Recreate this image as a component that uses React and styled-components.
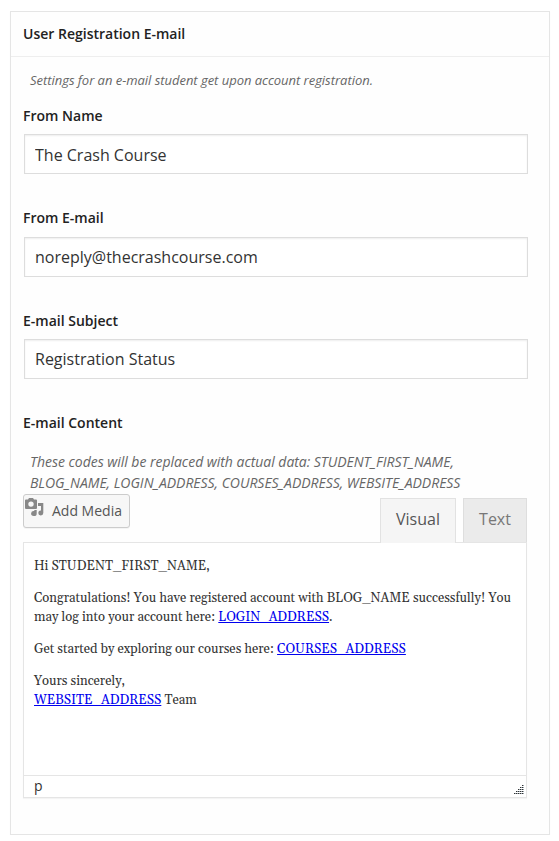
import React from "react";
import styled, { createGlobalStyle } from "styled-components";

const Global = createGlobalStyle`
  * { box-sizing: border-box; }
  body { margin: 0; background: #fff; font-family: "Open Sans", sans-serif; color: #32373c; }
`;

const Panel = styled.section`
  width: 540px;
  height: 824px;
  margin: 11px 0 0 10px;
  border: 1px solid #e5e5e5;
  background: #fefefe;
  box-shadow: 0 1px 1px rgba(0, 0, 0, 0.04);
`;

const PanelTitle = styled.h3`
  margin: 0;
  height: 45px;
  padding: 0 12px;
  border-bottom: 1px solid #eee;
  font-size: 14px;
  font-weight: 600;
  line-height: 44px;
  color: #222;
`;

const PanelBody = styled.div`
  padding: 13px 21px 0 12px;
`;

const Hint = styled.p`
  margin: 0;
  padding-left: 7px;
  font-size: ${(p) => p.$size}px;
  line-height: 21px;
  letter-spacing: -0.03px;
  font-style: italic;
  color: #666;
`;

const Fields = styled.div`
  padding-top: 13.9px;
`;

const Field = styled.div`
  height: 102.5px;
`;

const Label = styled.label`
  display: block;
  font-size: 14px;
  font-weight: 600;
  line-height: 22px;
  color: #222;
`;

const Input = styled.input`
  display: block;
  width: 504px;
  height: 40px;
  margin: 7.5px 0 0 1px;
  padding: ${(p) => p.$nudge || 0}px 10px 0;
  border: 1px solid #ddd;
  border-radius: 0;
  outline: none;
  background: #fff;
  box-shadow: inset 0 1px 2px rgba(0, 0, 0, 0.07);
  font: 16px "Open Sans", sans-serif;
  color: #333;
`;

const ContentHead = styled.div`
  height: 38.6px;
`;

const Tools = styled.div`
  display: flex;
  align-items: flex-start;
  width: 504px;
  height: 49px;
  margin-top: 1px;
`;

const MediaButton = styled.button`
  display: flex;
  align-items: center;
  width: 107px;
  height: 34px;
  margin-right: auto;
  padding: 0 0 1px 1px;
  border: 1px solid #ccc;
  border-radius: 3px;
  background: #f7f7f7;
  box-shadow: 0 1px 0 rgba(0, 0, 0, 0.04);
  font: 14px "Open Sans", sans-serif;
  color: #555;
  white-space: nowrap;
`;

const MediaGlyph = styled.svg`
  width: 19px;
  height: 19px;
  margin: -6px 8px 0 0;
  flex: none;
`;

const Tab = styled.button`
  position: relative;
  width: ${(p) => p.$width}px;
  height: ${(p) => (p.$active ? 45 : 44)}px;
  margin: 4px 0 0 ${(p) => (p.$active ? 0 : 7)}px;
  padding: 0 0 ${(p) => (p.$active ? 3 : 2)}px;
  border: 1px solid ${(p) => (p.$active ? "#e2e2e2" : "#dedede")};
  border-bottom: 0;
  background: ${(p) => (p.$active ? "#f5f5f5" : "#ebebeb")};
  font: 16px "Open Sans", sans-serif;
  color: ${(p) => (p.$active ? "#555" : "#777")};
`;

const Editor = styled.div`
  width: 504px;
  height: 256px;
  margin-top: -1px;
  display: flex;
  flex-direction: column;
  border: 1px solid #e5e5e5;
  background: #fff;
  box-shadow: 0 1px 1px rgba(0, 0, 0, 0.04);
`;

const Message = styled.div`
  flex: 1;
  padding: 14px 10px 0;
  font-family: Georgia, Gelasio, "Liberation Serif", serif;
  font-size: 13px;
  line-height: 19px;
  color: #333;
`;

const Paragraph = styled.p`
  margin: 0 0 13px;
`;

const Link = styled.a`
  color: #0000ee;
  text-decoration: underline;
  text-decoration-skip-ink: none;
`;

const StatusBar = styled.div`
  display: flex;
  justify-content: space-between;
  align-items: flex-end;
  height: 22px;
  padding: 0 2px 3px 10px;
  border-top: 1px solid #e5e5e5;
  font-size: 14px;
  line-height: 20px;
  color: #333;
`;

const StatusPath = styled.span`
  height: 18px;
`;

const Grip = styled.svg`
  width: 10px;
  height: 9px;
`;

function MediaIcon() {
  return (
    <MediaGlyph viewBox="0 0 19 19" fill="#888">
      <path
        fillRule="evenodd"
        d="M1 1.500h2L4 0h4l1 1.500h2q1 0 1 1V10q0 1-1 1H1q-1 0-1-1V2.500q0-1 1-1zM6 3.400a2.700 2.700 0 1 0 0 5.400a2.700 2.700 0 0 0 0-5.400z"
      />
      <path d="M13 5H18.300v10a2.500 2.400 0 1 1-2.300-2.400V8h-3z" />
      <path d="M9.300 12H11.700v3.500a2.800 2.500 0 1 1-2.400-2.400z" />
    </MediaGlyph>
  );
}

const gripRows = [1, 2, 3, 4, 5];

export default function App() {
  return (
    <>
      <Global />
      <Panel>
        <PanelTitle>User Registration E-mail</PanelTitle>
        <PanelBody>
          <Hint $size={13}>Settings for an e-mail student get upon account registration.</Hint>
          <Fields>
            <Field>
              <Label htmlFor="name">From Name</Label>
              <Input id="name" $nudge={1} defaultValue="The Crash Course" />
            </Field>
            <Field>
              <Label htmlFor="email">From E-mail</Label>
              <Input id="email" defaultValue="noreply@thecrashcourse.com" />
            </Field>
            <Field>
              <Label htmlFor="subject">E-mail Subject</Label>
              <Input id="subject" defaultValue="Registration Status" />
            </Field>
          </Fields>
          <ContentHead>
            <Label as="div">E-mail Content</Label>
          </ContentHead>
          <Hint $size={14}>
            These codes will be replaced with actual data: STUDENT_FIRST_NAME,
            <br />
            BLOG_NAME, LOGIN_ADDRESS, COURSES_ADDRESS, WEBSITE_ADDRESS
          </Hint>
          <Tools>
            <MediaButton>
              <MediaIcon />
              Add Media
            </MediaButton>
            <Tab $active $width={76}>Visual</Tab>
            <Tab $width={64}>Text</Tab>
          </Tools>
          <Editor>
            <Message>
              <Paragraph>Hi STUDENT_FIRST_NAME,</Paragraph>
              <Paragraph>
                Congratulations! You have registered account with BLOG_NAME successfully! You
                <br />
                may log into your account here: <Link href="#login">LOGIN_ADDRESS</Link>.
              </Paragraph>
              <Paragraph>
                Get started by exploring our courses here: <Link href="#courses">COURSES_ADDRESS</Link>
              </Paragraph>
              <Paragraph>
                Yours sincerely,
                <br />
                <Link href="#site">WEBSITE_ADDRESS</Link> Team
              </Paragraph>
            </Message>
            <StatusBar>
              <StatusPath>p</StatusPath>
              <Grip viewBox="0 0 10 9" shapeRendering="crispEdges">
                {gripRows.map((n) => (
                  <g key={n} strokeWidth="1">
                    <path d={`M${10 - n * 2} ${n * 2 - 1.5}H10`} stroke="#9aa5ad" />
                    <path
                      d={`M${10 - n * 2} ${n * 2 - 1.5}H10`}
                      stroke="#333"
                      strokeDasharray="1 1"
                    />
                  </g>
                ))}
              </Grip>
            </StatusBar>
          </Editor>
        </PanelBody>
      </Panel>
    </>
  );
}
